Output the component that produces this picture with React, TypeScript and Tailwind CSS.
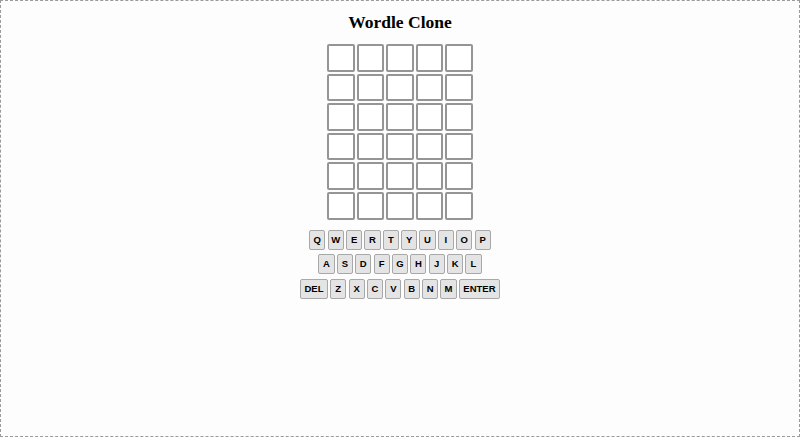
const rows = [
  ["Q", "W", "E", "R", "T", "Y", "U", "I", "O", "P"],
  ["A", "S", "D", "F", "G", "H", "J", "K", "L"],
  ["DEL", "Z", "X", "C", "V", "B", "N", "M", "ENTER"],
];

const Tile = () => (
  <div className="w-[27.6px] h-[27.6px] m-px border-2 border-[#959595] rounded-[2px] bg-white" />
);

const Key = ({label}: {label: string}) => {
  const wide = label.length > 1;
  return (
    <button
      type="button"
      className={
        wide
          ? "h-[20px] px-[3.5px] border border-[#a8a8a8] rounded-[2px] bg-[#e4e4e4] text-[9.5px] font-bold text-black leading-none"
          : "h-[20px] w-[16.2px] border border-[#a8a8a8] rounded-[2px] bg-[#e4e4e4] text-[9.5px] font-bold text-black leading-none"
      }
    >
      {label}
    </button>
  );
};

export default function App() {
  return (
    <div className="w-[800px] h-[437px] border border-dashed border-[#9a9a9a] bg-[#fdfdfd] flex flex-col items-center">
      <h1 className="mt-[11px] text-[17.5px] font-bold text-black leading-[20px] font-['Liberation_Serif',serif]">
        Wordle Clone
      </h1>
      <div className="mt-[11px] flex flex-col">
        {Array.from({length: 6}).map((_, r) => (
          <div className="flex" key={r}>
            {Array.from({length: 5}).map((_, c) => (
              <Tile key={c} />
            ))}
          </div>
        ))}
      </div>
      <div className="mt-[9px] flex flex-col items-center gap-[4.5px] font-['Liberation_Sans',sans-serif]">
        {rows.map((row, i) => (
          <div className="flex gap-[2.2px]" key={i}>
            {row.map((k) => (
              <Key label={k} key={k} />
            ))}
          </div>
        ))}
      </div>
    </div>
  );
}
